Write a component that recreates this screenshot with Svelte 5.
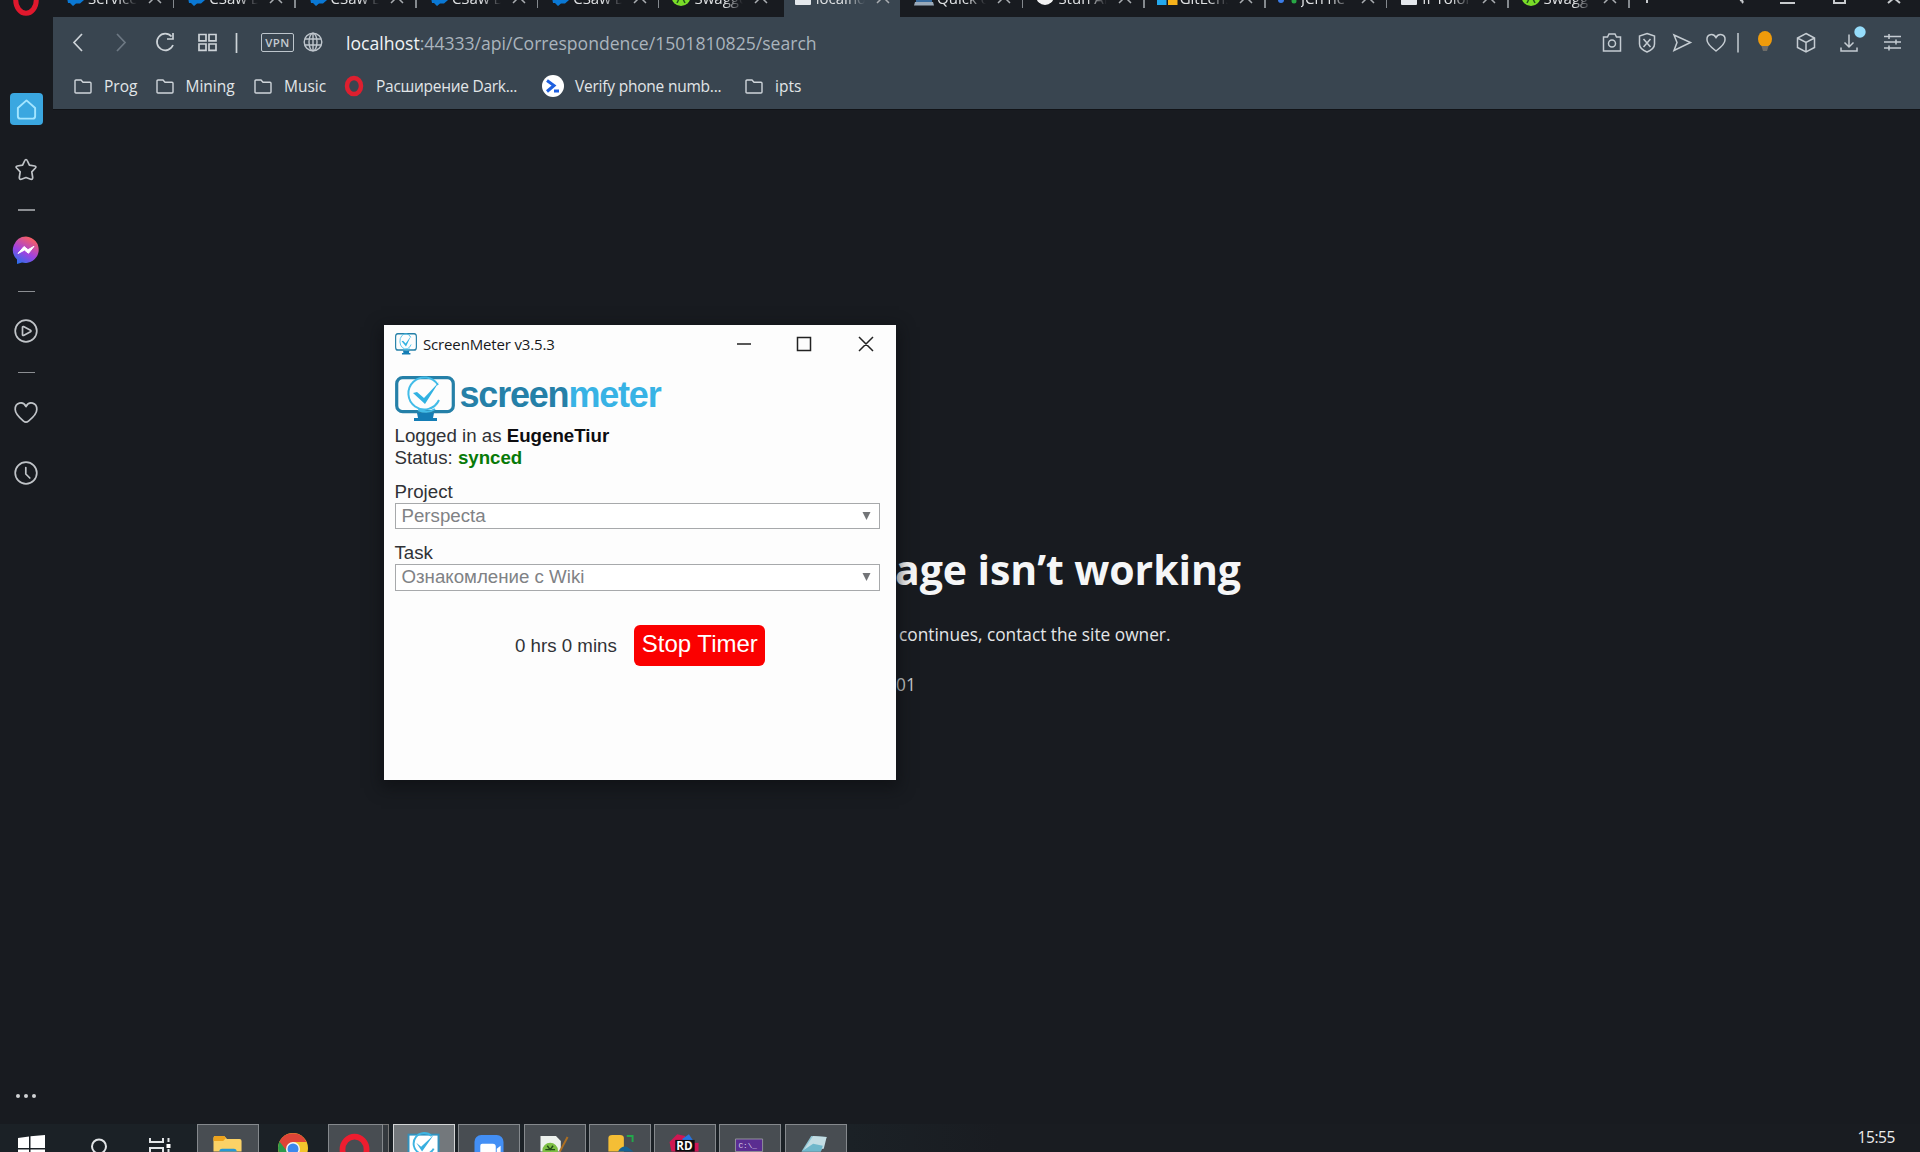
<script>
  const tabs = [
    { label: 'Service', icon: 'azure' },
    { label: 'CSaw D', icon: 'azure' },
    { label: 'CSaw B|', icon: 'azure' },
    { label: 'CSaw B|', icon: 'azure' },
    { label: 'CSaw D', icon: 'azure' },
    { label: 'Swagge', icon: 'swagger' },
    { label: 'localho', icon: 'page', active: true },
    { label: 'Quick c', icon: 'laptop' },
    { label: 'Stun Al', icon: 'round' },
    { label: 'GitLens', icon: 'ms' },
    { label: 'JCh ne', icon: 'dots' },
    { label: 'IPTolol', icon: 'page' },
    { label: 'Swagg', icon: 'swagger' },
  ];
  const apps = ['zoom', 'notepad', 'python', 'rider', 'cmd', 'glass'];
</script>

{#snippet check()}
  <svg class="monitor" viewBox="0 0 60 46" preserveAspectRatio="none">
    <rect x="1.7" y="1.7" width="56.6" height="34" rx="6" fill="none" stroke="#2580a8" stroke-width="3.2" />
    <path d="M22 37h17l-1 5h4v3H19v-3h4z" fill="#147db5" />
    <path d="M43 9A16 16 0 1 0 44 24M40 33Q33 38 23 34" fill="none" stroke="#42bce8" stroke-width="2" />
    <path d="M18 17l4-1 7 6L44 6 30 28z" fill="#31b2e2" />
  </svg>
{/snippet}

{#snippet folder()}
  <svg class="folder" viewBox="0 0 18 16"><path d="M1 3q0-1 1-1h5l2 2.3h7q1 0 1 1V14q0 1-1 1H2q-1 0-1-1z" /></svg>
{/snippet}

{#snippet favicon(kind)}
  <svg class="fav" viewBox="0 0 20 20">
    {#if kind === 'azure'}
      <path d="M-1 0h19v13l-4 3.500-4 0-3 2.500-3-3-2 0z" fill="#0a78d4" />
    {:else if kind === 'swagger'}
      <circle cx="9" cy="9.5" r="9.5" fill="#79dc28" /><path d="M5 16l2-4M13 16l-2-4" stroke="#22571a" stroke-width="1.5" />
    {:else if kind === 'page'}
      <rect x="1" y="1" width="16" height="17" rx="1" fill="#e4e8ec" />
    {:else if kind === 'laptop'}
      <path d="M1 2h16v13H1z" fill="#386c9f" /><path d="M0 15h18l1 3.500H-1z" fill="#9aa9b8" />
    {:else if kind === 'round'}
      <circle cx="9" cy="9" r="9" fill="#f2f2f2" />
    {:else if kind === 'ms'}
      <path d="M-1 8h9.500v10H-1z" fill="#24a9ee" /><path d="M10 8h9.500v10H10z" fill="#f6b21b" />
    {:else}
      <circle cx="2" cy="13" r="3" fill="#3b7de8" /><circle cx="15" cy="14" r="2.5" fill="#28a745" />
    {/if}
  </svg>
{/snippet}

<div class="screen">
  <div class="browser">
    <aside>
      <svg class="brand" viewBox="0 0 28 16"><ellipse cx="14" cy="0" rx="10.3" ry="13.3" fill="none" stroke="#e0182d" stroke-width="5" /></svg>
      <div class="home"><svg viewBox="0 0 24 24"><path d="M3 10.5L12 2.5l9 8V19q0 2.500-2.500 2.500h-13Q3 21.500 3 19z" /></svg></div>
      <svg class="s star" viewBox="0 0 24 24"><path d="M12 1.500q.8 0 1.200 1l2.200 4.700 5.300.8q2 .5.700 2l-3.600 3.800.9 5.700q0 2.300-2 1.700L12 19.500l-4.700 1.700q-2 .6-2-1.700l.9-5.700L2.600 10q-1.300-1.500.7-2l5.300-.8 2.200-4.700q.4-1 1.200-1z" /></svg>
      <i class="dash d1"></i>
      <svg class="messenger" viewBox="0 0 28 28">
        <defs><linearGradient id="mg" x1=".2" y1="1" x2=".7" y2="0"><stop stop-color="#2472ed" /><stop offset=".45" stop-color="#a142e0" /><stop offset="1" stop-color="#ff6159" /></linearGradient></defs>
        <path d="M14 .5A13.500 13.200 0 1 1 10 26.500L5 28v-4.500A13.400 13.400 0 0 1 14 .5z" fill="url(#mg)" />
        <path d="M6 17.500l6-7 4 3.200 6-3.400-5.500 7-4-3.200z" fill="#fff" stroke="#fff" stroke-linejoin="round" />
      </svg>
      <i class="dash d2"></i>
      <svg class="s play" viewBox="0 0 24 24"><circle cx="12" cy="12" r="10.800" /><path d="M8.500 8.300v7.400q0 1 1 .7l7-3.700q1-.7 0-1.400l-7-3.700q-1-.3-1 .7z" /></svg>
      <i class="dash d3"></i>
      <svg class="s heart" viewBox="0 0 24 24"><path d="M12 5.500C9-.5 1 1.500 1.200 8.500c0 4 4 8 8.300 11.600q2.500 2 5 0C19 16.500 22.800 12.500 22.800 8.500 23 1.500 15 -.5 12 5.500z" /></svg>
      <svg class="s clock" viewBox="0 0 24 24"><circle cx="12" cy="12" r="10.800" /><path d="M11.800 6.500v6.500l4 4" /></svg>
      <div class="more"><b></b><b></b><b></b></div>
    </aside>

    <main>
      <div class="tabs">
        {#each tabs as tab}
          <div class="tab" class:active={tab.active}>
            {@render favicon(tab.icon)}
            <span class="tab-label">{tab.label}</span>
            <svg class="x" viewBox="0 0 12 12"><path d="M0 0l12 12M12 0L0 12" /></svg>
          </div>
        {/each}
        <svg class="caption" viewBox="0 0 290 17">
          <path d="M17 0v3M110 0q4 1 2 3M150 3h15M204 0v3h11V0M258 3l6-5 6 5" />
        </svg>
      </div>

      <div class="nav">
        <svg class="ctl" viewBox="0 0 190 24">
          <path d="M29 4l-8 8.500 8 8.500" />
          <path class="dim" d="M64 4l8 8.500-8 8.500" />
          <path d="M118.500 6.500A8.300 8.300 0 1 0 120 15M120 3v6h-6" />
          <path d="M146 4.500h7v6.300h-7zM156 4.500h7v6.300h-7zM146 14h7v6.300h-7zM156 14h7v6.300h-7z" />
          <path d="M183.500 3v20" />
        </svg>
        <span class="vpn">VPN</span>
        <svg class="globe" viewBox="0 0 20 20"><circle cx="10" cy="10" r="8.800" /><ellipse cx="10" cy="10" rx="4" ry="8.800" /><path d="M2 7h16M2 13h16M10 1v18" /></svg>
        <span class="url"><b>localhost</b>:44333/api/Correspondence/1501810825/search</span>
        <svg class="tools" viewBox="0 0 320 36">
          <path d="M3.500 14.500h4l1.500-3h6l1.500 3h4v14h-17z" transform="translate(0 -.5)" /><circle cx="12" cy="20.500" r="3.500" />
          <path d="M47 10.500l7.500 2.500v8q0 5-7.500 8-7.500-3-7.500-8v-8zM43.500 16l7 8M50.500 16l-7 8" />
          <path d="M74 12l16.500 7.500L74 27.500l3-8z" />
          <path d="M116 14.500c-3-5-9.500-3-9 2.500 0 4 5 8 9 11 4-3 9-7 9-11 .5-5.500-6-7.500-9-2.500z" />
          <path d="M138 10v19.500" />
          <ellipse cx="165" cy="16" rx="7" ry="8" fill="#ef9b0b" stroke="none" /><path d="M161.500 23h7l-1.500 5h-4z" fill="#6e6c68" stroke="none" />
          <path d="M206 10.500l8.500 4.500v9.500L206 29l-8.500-4.500V15zM197.500 15l8.500 4.500 8.500-4.500M206 19.500V29" />
          <path d="M249 11.500v12M244.500 19.500l4.500 4.500 4.500-4.500M241 24.500V28h16v-3.500" />
          <circle cx="260" cy="9" r="5.700" fill="#96ddfb" stroke="none" />
          <path d="M284 13.500h17M284 19h17M284 25h17M289 11v5M296 16.500v5M289 22.500v5" />
        </svg>
      </div>

      <div class="bookmarks">
        {@render folder()}<span class="w-prog">Prog</span>
        {@render folder()}<span class="w-mining">Mining</span>
        {@render folder()}<span class="w-music">Music</span>
        <svg class="bm-opera" viewBox="0 0 20 22"><ellipse cx="10" cy="11" rx="7" ry="8" fill="none" stroke="#de1f2f" stroke-width="4.500" /></svg>
        <span class="w-dark">Расширение Dark...</span>
        <svg class="bm-verify" viewBox="0 0 22 22"><circle cx="11" cy="11" r="11" fill="#fff" /><path d="M5 5.500l7 5-7 6M12 16h5" fill="none" stroke="#1e5fe0" stroke-width="3" /></svg>
        <span class="w-verify">Verify phone numb...</span>
        {@render folder()}<span class="w-ipts">ipts</span>
      </div>

      <section class="page">
        <h1>age isn’t working</h1>
        <p class="advice">continues, contact the site owner.</p>
        <p class="code">01</p>
      </section>
    </main>
  </div>

  <footer>
    <svg class="system" viewBox="0 0 197 28">
      <path d="M18 14l11-1.500V24H18zM30.500 12.300L45 11v13H30.500zM18 25.500h11V34H18zM30.500 25.500H45V34H30.500z" fill="#fff" />
      <g fill="none" stroke="#e2e5e7" stroke-width="2"><circle cx="99" cy="22.500" r="7" /><path d="M150 14v4h13v-4M150 28v-4h13v4M168.500 14v4M168.500 25v3" /></g>
      <path d="M166.500 20h4v4h-4z" fill="#fff" />
    </svg>
    <div class="app explorer"><svg viewBox="0 0 62 27"><path d="M16 27V13q0-2 2-2h9l3 3h13q2 0 2 2v11z" fill="#fbd266" /><path d="M16 15v-2q0-2 2-2h9l2 2-3 3H16z" fill="#eda31d" /><path d="M22 27q0-3 3-3h12q3 0 3 3z" fill="#2697d5" /></svg></div>
    <svg class="chrome" viewBox="0 0 69 28"><circle cx="34" cy="24" r="15" fill="#f3c52c" /><path d="M34 24L21 16.500A15 15 0 0 0 27 37z" fill="#2b9a4b" /><path d="M20.500 17.500A15 15 0 0 1 47.500 18H34L27 26z" fill="#df4437" /><circle cx="34" cy="25" r="7" fill="#f5f5f5" /><circle cx="34" cy="25" r="5.500" fill="#3b88ed" /></svg>
    <div class="app opera"><svg viewBox="0 0 55 27"><ellipse cx="26.500" cy="25" rx="12.500" ry="13.500" fill="none" stroke="#ee1d2f" stroke-width="6" /></svg></div>
    <i class="stack"></i>
    <div class="app current"><svg viewBox="0 0 62 27"><rect x="15" y="9.500" width="31" height="22" fill="#fff" stroke="#3291bd" stroke-width="2" /><path d="M39 11a11 11 0 1 0 2 13" fill="none" stroke="#3fb4e1" stroke-width="2" /><path d="M23 18l5 4L41 10 29 27z" fill="#38afe0" /></svg></div>
    {#each apps as app}
      <div class="app">
        <svg viewBox="0 0 62 27">
          {#if app === 'zoom'}
            <rect x="16" y="10" width="30" height="30" rx="7" fill="#438ff5" /><path d="M22 21q0-2 2-2h11q3 0 3 3v6H22zM39 24l4-3v7h-4z" fill="#fff" />
          {:else if app === 'notepad'}
            <path d="M16 11h16l5 5v11H16z" fill="#edf1ed" /><circle cx="26" cy="26" r="8" fill="#7cbe43" /><path d="M21 25h10M23 21l3 4 3-4" stroke="#234c18" stroke-width="1.500" fill="none" /><path d="M44 12l-8 15" stroke="#ad6f22" stroke-width="2" />
          {:else if app === 'python'}
            <path d="M19 13q0-3 4-3h8q4 0 4 3v14H19z" fill="#f5be35" /><path d="M38 11h6v6" stroke="#23a84b" stroke-width="2" fill="none" /><path d="M29 27q3-6 9-5l7 5z" fill="#176293" />
          {:else if app === 'rider'}
            <path d="M15 17l8-8 8 2v16H17z" fill="#cf1752" /><path d="M28 14l7-5 4 6-5 6z" fill="#2674df" /><path d="M38 18h7v9h-7z" fill="#d01655" /><path d="M21 15h20v12H21z" fill="#0b0b0d" /><text x="22" y="25" class="rd">RD</text>
          {:else if app === 'cmd'}
            <path d="M16 14h28v13H16z" fill="#5a2d91" stroke="#92939b" /><text x="19" y="23" class="prompt">C:\_</text>
          {:else}
            <path d="M26 11l16 1-6 15H16z" fill="#8fc6d5" /><path d="M28 11l14 1-3 12-21 2z" fill="#c3dde4" /><path d="M16 27l12-8 10 2-2 6z" fill="#6fb7cb" />
          {/if}
        </svg>
      </div>
    {/each}
    <time>15:55</time>
  </footer>

  <div class="window">
    <header>
      {@render check()}
      <span class="title">ScreenMeter v3.5.3</span>
      <svg class="buttons" viewBox="0 0 152 40"><path d="M0 20h14M60.500 13.500h13v13h-13zM122 13l14 14M136 13l-14 14" /></svg>
    </header>
    <div class="logo">{@render check()}<span class="word"><span>screen</span><span class="light">meter</span></span></div>
    <div class="line">Logged in as <b class="user">EugeneTiur</b></div>
    <div class="line">Status: <b class="synced">synced</b></div>
    <div class="field first"><span>Project</span><div class="select"><span>Perspecta</span><svg viewBox="0 0 8 8"><path d="M0 0h8L4 8z" /></svg></div></div>
    <div class="field"><span>Task</span><div class="select"><span>Ознакомление с Wiki</span><svg viewBox="0 0 8 8"><path d="M0 0h8L4 8z" /></svg></div></div>
    <div class="timer"><span>0 hrs 0 mins</span><button>Stop Timer</button></div>
  </div>
</div>

<style>
  :global(body) { margin: 0; background: #181b20; }
  .screen, .screen * { box-sizing: border-box; }
  .screen { position: relative; width: 1920px; height: 1152px; overflow: hidden; background: #181b20; font-family: "Open Sans", "Noto Sans", sans-serif; }
  svg { display: block; flex: none; overflow: visible; }
  .browser { display: flex; height: 1124px; }

  aside { width: 53px; padding-right: 1px; flex: none; display: flex; flex-direction: column; align-items: center; overflow: hidden; }
  .brand { width: 28px; height: 16px; overflow: hidden; }
  .home { width: 33px; height: 32px; margin-top: 77px; border-radius: 4px; background: #3aa7e0; display: grid; place-items: center; flex: none; }
  .home svg { width: 23px; height: 23px; fill: none; stroke: #a3e5ff; stroke-width: 2; stroke-linejoin: round; }
  .s { width: 24px; height: 24px; fill: none; stroke: #c0c4c8; stroke-width: 1.700; stroke-linejoin: round; stroke-linecap: round; }
  .star { margin-top: 33px; }
  .dash { width: 17px; height: 1.500px; background: #8b8e92; flex: none; }
  .d1 { margin-top: 27px; }
  .messenger { width: 28px; height: 28px; margin-top: 25px; }
  .d2 { margin-top: 27px; }
  .play { margin-top: 27px; }
  .d3 { margin-top: 28.500px; }
  .heart { margin-top: 27.500px; }
  .clock { margin-top: 36px; }
  .more { display: flex; gap: 4px; margin-top: auto; margin-bottom: 26px; }
  .more b { width: 4px; height: 4px; border-radius: 50%; background: #d0d2d4; }

  main { flex: 1; min-width: 0; display: flex; flex-direction: column; }
  .tabs { height: 17px; display: flex; overflow: hidden; }
  .tab { width: 121.300px; flex: none; height: 17px; padding-left: 13px; display: flex; }
  .tab::after { content: ""; width: 1.500px; height: 8px; background: #84898e; margin-left: 12px; }
  .tab:has(+ .active)::after, .tab.active::after { background: transparent; }
  .active { background: linear-gradient(#394550, #394550) 3px 0 / 116px 100% no-repeat; }
  .fav { width: 20px; height: 20px; margin-top: -13px; }
  .tab-label { width: 50px; margin: -12.500px 0 0 2px; overflow: hidden; white-space: nowrap; font-size: 15px; font-weight: 500; line-height: 20px; color: #dfe1e3; mask-image: linear-gradient(90deg, #000 60%, transparent 98%); }
  .x { width: 12px; height: 12px; margin: -9px 0 0 11px; fill: none; stroke: #a9adb1; stroke-width: 1.500; }
  .caption { width: 290px; height: 17px; fill: none; stroke: #c8cbce; stroke-width: 2; }

  .nav { height: 50px; flex: none; background: #394550; display: flex; align-items: center; }
  .ctl { width: 190px; height: 24px; fill: none; stroke: #cdd3d8; stroke-width: 1.700; }
  .dim { stroke: #6d7883; }
  .vpn { width: 33px; height: 19px; margin-left: 18px; border: 1.500px solid #bdc5cc; border-radius: 2px; font-size: 11.500px; line-height: 17px; font-weight: 600; text-align: center; color: #c4cbd1; letter-spacing: .4px; }
  .globe { width: 20px; height: 20px; margin-left: 9px; fill: none; stroke: #bfc6cd; stroke-width: 1.400; }
  .url { margin-left: 23px; padding-top: 1px; font-size: 17.600px; line-height: 24px; color: #aab4bd; white-space: nowrap; }
  .url b { font-weight: 400; color: #f0f3f5; }
  .tools { width: 320px; height: 36px; margin-left: auto; margin-bottom: 3px; fill: none; stroke: #c5ccd2; stroke-width: 1.500; }

  .bookmarks { height: 42px; flex: none; background: #394550; padding-left: 21px; display: flex; align-items: center; font-size: 15.500px; line-height: 24px; color: #e1e5e8; white-space: nowrap; padding-bottom: 4px; }
  .bookmarks > span { flex: none; padding-left: 12px; }
  .folder { width: 18px; height: 16px; fill: none; stroke: #cfd5da; stroke-width: 1.400; }
  .w-prog { width: 63.500px; }
  .w-mining { width: 80.500px; }
  .w-music { width: 72px; }
  .bm-opera { width: 20px; height: 22px; }
  .bookmarks .w-dark { width: 178px; letter-spacing: -.280px; }
  .bm-verify { width: 22px; height: 22px; }
  .bookmarks .w-verify { width: 181px; padding-left: 11px; letter-spacing: -.220px; }

  .page { flex: 1; padding: 423px 0 0 842px; border-top: 1px solid #111317; color: #e4e6e8; }
  h1 { margin: 0; font-size: 41px; line-height: 72px; color: #f5f6f7; white-space: nowrap; font-weight: 700; letter-spacing: -.070px; }
  p { margin: 0; font-size: 17.300px; line-height: 24px; }
  .advice { padding: 18px 0 0 4px; font-weight: 500; }
  .code { padding: 26px 0 0 1px; color: #c6c9cc; }

  footer { height: 28px; display: flex; background: linear-gradient(90deg, #1b2126, #1b2126 850px, #191c21 1000px); overflow: hidden; }
  .system { width: 197px; height: 28px; }
  .app { width: 62px; height: 28px; flex: none; margin-right: 3.300px; background: #484d52; border: 1px solid #85898d; border-bottom: 0; overflow: hidden; }
  .app svg { width: 60px; height: 27px; }
  .explorer { margin-right: 0; }
  .chrome { width: 69px; height: 28px; }
  .opera { width: 55px; margin-right: 0; }
  .opera svg { width: 53px; }
  .stack { width: 6px; margin: 0 4px 0 0; background: #34393e; border-top: 1px solid #777; border-right: 1px solid #777; }
  .current { background: #73787c; border-color: #d2d4d5; }
  .rd { font: 700 12px "Open Sans", sans-serif; fill: #fff; }
  .prompt { font: 8px "Liberation Mono", monospace; fill: #d9cce8; }
  time { margin-left: auto; margin-right: 25px; font-size: 15.500px; line-height: 26px; color: #eceded; letter-spacing: -.400px; }

  .window { position: absolute; left: 384px; top: 325px; width: 512px; height: 455px; background: #fdfdfd; box-shadow: 0 5px 14px 3px #0c0e11a0; padding: 0 11px 0 10.500px; font-family: "Liberation Sans", Arial, sans-serif; font-size: 18.700px; color: #303236; }
  header { display: flex; align-items: center; height: 40px; padding-bottom: 2px; font-family: "Open Sans", sans-serif; }
  header .monitor { width: 22px; height: 22px; }
  .title { margin-left: 6.500px; font-size: 15px; color: #17191c; white-space: nowrap; letter-spacing: -.150px; }
  .buttons { width: 152px; height: 40px; margin-left: auto; margin-right: -4px; fill: none; stroke: #222; stroke-width: 1.500; }
  .logo { display: flex; height: 57px; padding-top: 11px; }
  .logo .monitor { width: 60px; height: 46px; }
  .word { margin-left: 5px; font-size: 36px; line-height: 37px; font-weight: 700; color: #2580a8; letter-spacing: -1.200px; }
  .light { color: #38b3e5; }
  .line { line-height: 21.500px; height: 21.500px; white-space: nowrap; }
  .line:nth-of-type(2) { margin-top: 3px; }
  .user { color: #0d0d10; }
  .synced { color: #087a08; }
  .field > span { display: block; line-height: 20px; height: 21px; }
  .field { margin: 14px 5px 0 0; }
  .field.first { margin-top: 13.500px; }
  .select { height: 26.500px; border: 1.500px solid #a7a9ab; display: flex; align-items: center; justify-content: space-between; padding: 0 8px 0 6px; color: #808285; background: #fff; }
  .select svg { width: 9px; height: 8px; fill: #727477; }
  .timer { display: flex; align-items: center; margin: 34.500px 0 0 120.500px; white-space: nowrap; }
  button { width: 131px; height: 41px; padding: 0 0 3px; margin-left: 17.500px; border: 0; border-radius: 6px; background: #fb0000; color: #fff; font-family: inherit; font-size: 24px; }
</style>
